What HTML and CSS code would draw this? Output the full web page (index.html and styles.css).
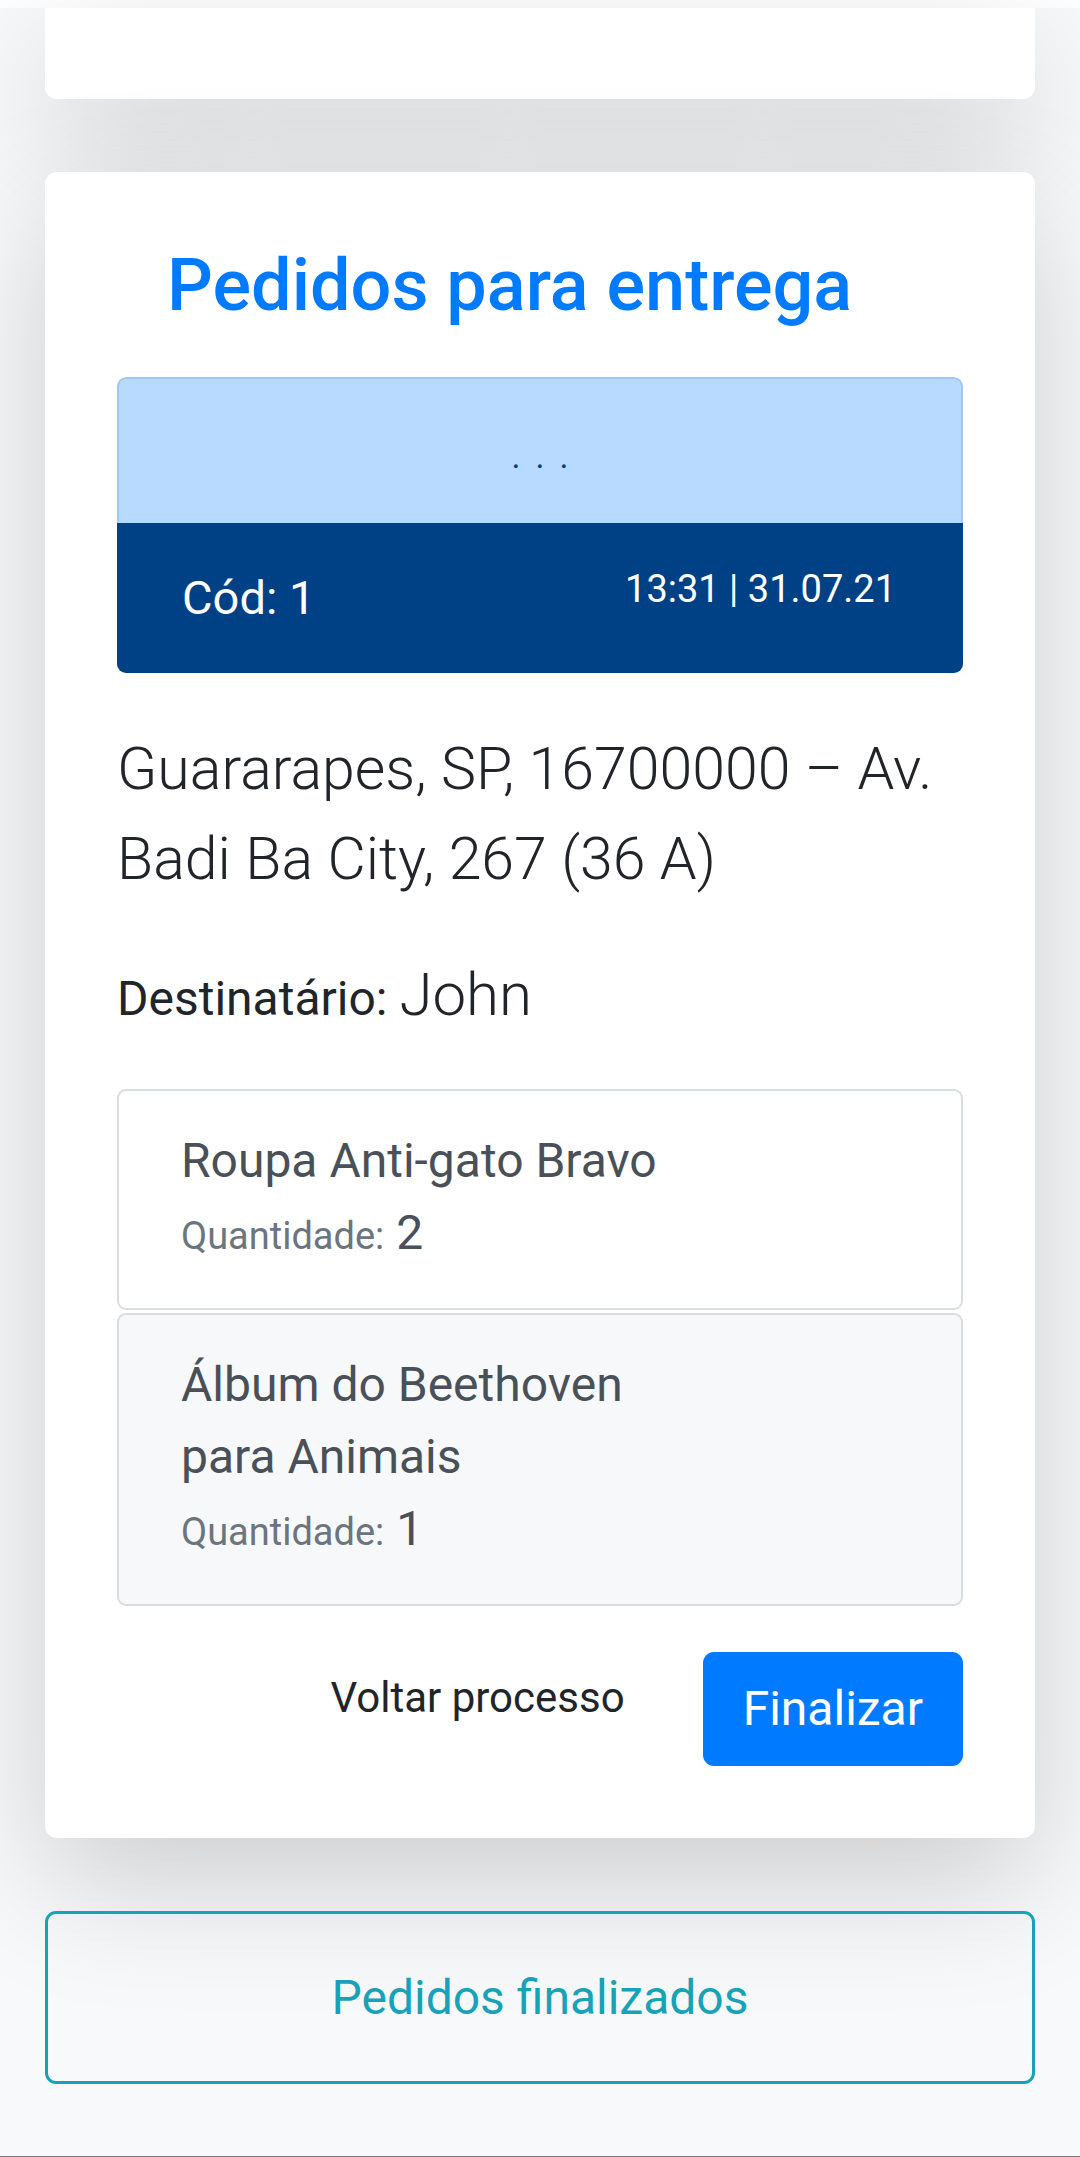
FILE: index.html
```html
<!DOCTYPE html>
<html lang="pt-BR">
<head>
<meta charset="utf-8">
<title>Pedidos para entrega</title>
<link rel="stylesheet" href="styles.css">
</head>
<body>
  <div class="top-strip"></div>
  <div class="card card-prev"></div>

  <section class="card card-main">
    <h3 class="title">Pedidos para entrega</h3>

    <div class="order">
      <div class="order-top"><span class="dots">...</span></div>
      <div class="order-bottom">
        <span class="code">Cód: 1</span>
        <span class="stamp">13:31 | 31.07.21</span>
      </div>
    </div>

    <p class="address">Guararapes, SP, 16700000 – Av. Badi Ba City, 267 (36 A)</p>

    <p class="recipient">Destinatário: <span class="recipient-name">John</span></p>

    <ul class="items">
      <li class="item">
        <div class="item-name">Roupa Anti-gato Bravo</div>
        <div class="item-qty"><span class="qty-label">Quantidade:</span> 2</div>
      </li>
      <li class="item item-alt">
        <div class="item-name">Álbum do Beethoven para Animais</div>
        <div class="item-qty"><span class="qty-label">Quantidade:</span> 1</div>
      </li>
    </ul>

    <div class="actions">
      <button class="btn-back">Voltar processo</button>
      <button class="btn-finish">Finalizar</button>
    </div>
  </section>

  <button class="btn-done">Pedidos finalizados</button>
  <div class="bottom-line"></div>
</body>
</html>
```

FILE: styles.css
```css
* { box-sizing: border-box; }

html, body {
  margin: 0;
  padding: 0;
}

body {
  background: #f8f9fa;
  font-family: Roboto, "Noto Sans", "Liberation Sans", sans-serif;
  color: #212529;
  width: 1080px;
  overflow: hidden;
}

.top-strip {
  height: 8px;
  background: #ffffff;
}

.card {
  background: #ffffff;
  margin: 0 45px;
  border-radius: 12px;
  box-shadow: 0 44px 132px rgba(0, 0, 0, 0.175);
}

.card-prev {
  height: 91px;
  border-radius: 0 0 12px 12px;
}

.card-main {
  margin-top: 73px;
  padding: 68px 72px 72px 72px;
}

.title {
  margin: 0 0 45px 0;
  padding-left: 50px;
  font-size: 72px;
  line-height: 92px;
  font-weight: 500;
  color: #007bff;
}

.order {
  border-radius: 9px;
  overflow: hidden;
}

.order-top {
  background: #b8daff;
  border: 2px solid #a3c6ec;
  border-bottom: none;
  border-radius: 9px 9px 0 0;
  height: 146px;
  padding-top: 57px;
  text-align: center;
}

.dots {
  display: inline-block;
  font-size: 34px;
  line-height: 40px;
  letter-spacing: 15px;
  padding-left: 15px;
  color: #004085;
}

.order-bottom {
  background: #004085;
  height: 150px;
  padding: 38px 67px 0 65px;
  display: flex;
  justify-content: space-between;
  align-items: flex-start;
  color: #ffffff;
}

.code {
  font-size: 47px;
  line-height: 74px;
}

.stamp {
  font-size: 38px;
  line-height: 57px;
}

.address {
  margin: 51px 0 0 0;
  font-size: 59px;
  line-height: 90px;
  font-weight: 300;
  color: #212529;
}

.recipient {
  margin: 50px 0 0 0;
  font-size: 48px;
  line-height: 66px;
  color: #212529;
}

.recipient-name {
  font-size: 60px;
  line-height: 82px;
  font-weight: 300;
}

.items {
  list-style: none;
  margin: 53px 0 0 0;
  padding: 0;
}

.item {
  border: 2px solid #dadde0;
  border-radius: 9px;
  padding: 34px 62px 36px 62px;
  margin-bottom: 3px;
  background: #ffffff;
  color: #495057;
  font-size: 48px;
  line-height: 72px;
}

.item-alt {
  background: #f7f8fa;
}

.item-name {
  max-width: 520px;
}

.qty-label {
  font-size: 38px;
  color: #6c757d;
}

.actions {
  margin-top: 46px;
  display: flex;
  justify-content: flex-end;
  align-items: flex-start;
}

.btn-back {
  font-family: inherit;
  background: transparent;
  border: none;
  color: #212529;
  font-size: 42px;
  line-height: 63px;
  padding: 14px 33px;
  margin-right: 45px;
}

.btn-finish {
  font-family: inherit;
  background: #007bff;
  border: none;
  border-radius: 11px;
  color: #ffffff;
  font-size: 48px;
  line-height: 72px;
  padding: 21px 40px;
}

.btn-done {
  display: block;
  font-family: inherit;
  width: 990px;
  height: 173px;
  margin: 73px 45px 0 45px;
  background: transparent;
  border: 3px solid #17a2b8;
  border-radius: 11px;
  color: #17a2b8;
  font-size: 48px;
  line-height: 60px;
}

.bottom-line {
  margin-top: 72px;
  height: 1px;
  background: #7a7a7a;
}
```
